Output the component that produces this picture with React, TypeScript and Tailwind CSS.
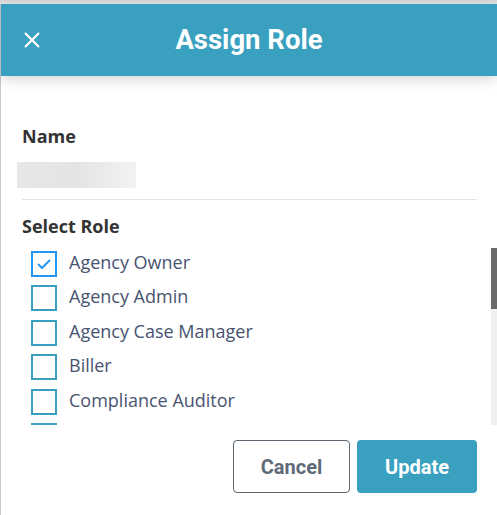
import React from 'react';

const roles = [
  { name: 'Agency Owner', checked: true },
  { name: 'Agency Admin', checked: false },
  { name: 'Agency Case Manager', checked: false },
  { name: 'Biller', checked: false },
  { name: 'Compliance Auditor', checked: false },
  { name: '', checked: false },
];

const openSans = { fontFamily: '"Open Sans", "Noto Sans", sans-serif' };

const Checkbox = ({ checked }: { checked: boolean }) => (
  <div
    className={
      checked
        ? 'w-[26px] h-[26px] border-2 border-[#2196f3] flex items-center justify-center shrink-0'
        : 'w-[26px] h-[26px] border-2 border-[#3a9fbf] shrink-0'
    }
  >
    {checked && (
      <svg width="16" height="16" viewBox="0 0 16 16" fill="none">
        <path d="M2.5 8.5 L6 12 L13.5 4.5" stroke="#2196f3" strokeWidth="2" strokeLinecap="round" strokeLinejoin="round" />
      </svg>
    )}
  </div>
);

export default function App() {
  return (
    <div className="w-[497px] h-[515px] bg-white overflow-hidden flex flex-col">
      <div className="h-[4px] bg-gradient-to-b from-[#d4d4d4] to-[#e6e6e6] shrink-0" />
      <div className="flex-1 flex flex-col border-l border-[#c8c8cc] min-h-0">
        <div className="h-[72px] bg-[#39a0bf] flex items-center relative shadow-[0_4px_12px_rgba(0,0,0,0.15)] shrink-0 z-10">
          <button className="absolute left-[22px] top-[27px] w-[18px] h-[18px] flex items-center justify-center">
            <svg width="18" height="18" viewBox="0 0 18 18">
              <path d="M2 2 L16 16 M16 2 L2 16" stroke="#fff" strokeWidth="2.2" />
            </svg>
          </button>
          <h1
            className="flex-1 text-center text-white text-[27.5px] font-bold"
            style={{ fontFamily: 'Roboto, sans-serif' }}
          >
            Assign Role
          </h1>
        </div>

        <div className="pl-[21px] pr-[20px] pt-[48px]" style={openSans}>
          <h2 className="text-[18px] leading-[24px] font-bold text-[#333333]">Name</h2>
          <div className="mt-[14px] ml-[-5px] w-[119px] h-[26px] bg-gradient-to-r from-[#e6e7e7] via-[#e4e4e4] to-[#f2f2f2]" />
          <div className="mt-[11px] h-px bg-[#e3e3e3]" />
          <h2 className="mt-[14px] text-[18px] leading-[24px] font-bold text-[#333333]">Select Role</h2>
        </div>

        <div className="flex mt-[6px] h-[181px] overflow-hidden shrink-0" style={openSans}>
          <ul className="flex-1 pl-[30px] pt-[7px]">
            {roles.map((r, i) => (
              <li key={i} className="h-[34.4px] flex items-start gap-[12px]">
                <Checkbox checked={r.checked} />
                {r.name && (
                  <span className="text-[18px] leading-[22px] text-[#485370]">{r.name}</span>
                )}
              </li>
            ))}
          </ul>
          <div className="w-[6px] mt-[4px] bg-[#f0f0f0] flex flex-col">
            <div className="h-[61px] bg-[#6b6b6b]" />
          </div>
        </div>

        <div className="flex justify-end gap-[7px] pr-[20px] pt-[15px]" style={{ fontFamily: 'Roboto, sans-serif' }}>
          <button className="w-[117px] h-[53px] rounded-[4px] border border-[#5b6670] text-[#5f6b78] text-[20px] font-bold">
            Cancel
          </button>
          <button className="w-[120px] h-[53px] rounded-[4px] bg-[#39a0bf] text-white text-[20px] font-bold">
            Update
          </button>
        </div>
      </div>
    </div>
  );
}
